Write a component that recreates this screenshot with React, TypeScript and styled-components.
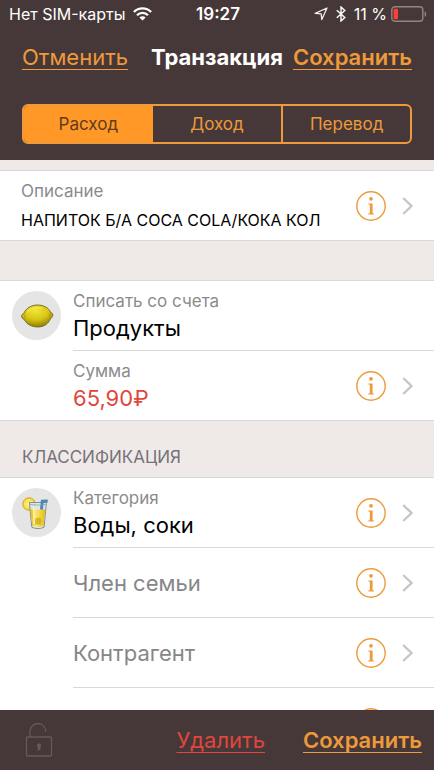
import React, { useState } from "react";
import styled, { createGlobalStyle } from "styled-components";

const color = {
  bar: "#463838",
  accent: "#ff9827",
  link: "#ee9a3b",
  danger: "#e0463d",
  ground: "#efeae8",
  line: "#d9d8d9",
  caption: "#8b8b8c",
  chevron: "#c6c6ca",
};

const GlobalStyle = createGlobalStyle`
  * { box-sizing: border-box; }
  body { margin: 0; background: ${color.ground}; font-family: Inter, "Noto Sans", sans-serif; }
  button { font: inherit; color: inherit; background: none; border: 0; padding: 0; margin: 0; cursor: pointer; }
  svg { display: block; flex: none; }
`;

const Screen = styled.div`
  display: flex;
  flex-direction: column;
  height: 100vh;
  overflow: hidden;
`;

const Header = styled.header`
  flex: none;
  background: ${color.bar};
  color: #fff;
  padding-bottom: 16px;
`;

const StatusBar = styled.div`
  display: grid;
  grid-template-columns: 1fr auto 1fr;
  align-items: center;
  height: 28px;
  padding: 0 7px 0 9px;
  font-size: 16px;
  line-height: 20px;
  white-space: nowrap;
`;

const StatusGroup = styled.div<{ $end?: boolean }>`
  display: flex;
  align-items: center;
  gap: 8px;
  justify-content: ${(p) => (p.$end ? "flex-end" : "flex-start")};
`;

const Clock = styled.time`
  font-size: 17px;
  font-weight: 600;
`;

const BatteryLevel = styled.span`
  display: flex;
  align-items: center;
  gap: 4px;
`;

const NavBar = styled.nav`
  display: grid;
  grid-template-columns: 1fr auto 1fr;
  align-items: center;
  height: 58px;
  padding: 0 22px;
  margin-bottom: 18px;
`;

const Title = styled.h1`
  margin: 0;
  font-size: 22px;
  line-height: 28px;
  font-weight: 700;
`;

const LinkButton = styled.button<{ $strong?: boolean; $danger?: boolean }>`
  && {
    justify-self: ${(p) => (p.$strong ? "end" : "start")};
    color: ${(p) => (p.$danger ? color.danger : color.link)};
    font-size: 22px;
    line-height: 28px;
    font-weight: ${(p) => (p.$strong ? 600 : 400)};
    text-decoration: underline;
    text-decoration-thickness: 1px;
    text-underline-offset: 4px;
    text-decoration-skip-ink: none;
  }
`;

const Segments = styled.div`
  display: grid;
  grid-template-columns: repeat(3, minmax(0, 1fr));
  height: 40px;
  margin: 0 22px;
  border: 2px solid ${color.link};
  border-radius: 6px;
  overflow: hidden;
`;

const Segment = styled.button<{ $active: boolean }>`
  && {
    font-size: 17px;
    line-height: 20px;
    color: ${(p) => (p.$active ? "#5e3c1c" : color.link)};
    background: ${(p) => (p.$active ? color.accent : "transparent")};
  }
  &&:last-child {
    border-left: 2px solid ${color.link};
  }
`;

const Content = styled.main`
  flex: 1;
  min-height: 0;
  overflow: hidden;
  padding-top: 10px;
`;

const Group = styled.section`
  background: #fff;
  border-top: 1px solid ${color.line};
  border-bottom: 1px solid ${color.line};
`;

const Spacer = styled.div`
  height: 39px;
`;

const GroupTitle = styled.h2`
  margin: 0;
  padding: 26px 22px 10px;
  font-size: 17px;
  line-height: 20px;
  font-weight: 400;
  color: #77727a;
`;

const Row = styled.div`
  display: flex;
  align-items: stretch;
`;

const IconSlot = styled.div`
  flex: none;
  width: 73px;
  padding: 10px 0 0 12px;
`;

const Badge = styled.div`
  display: flex;
  align-items: center;
  justify-content: center;
  width: 49px;
  height: 49px;
  border-radius: 50%;
  background: #e5e5e5;
`;

const RowBody = styled.div<{ $inset?: boolean; $last?: boolean }>`
  flex: 1;
  min-width: 0;
  display: flex;
  align-items: center;
  min-height: ${(p) => (p.$last ? 69 : 70)}px;
  padding-left: ${(p) => (p.$inset ? 21 : 0)}px;
  padding-right: 20px;
  border-bottom: ${(p) => (p.$last ? 0 : 1)}px solid ${color.line};
`;

const RowText = styled.button<{ $small?: boolean }>`
  && {
    flex: 1;
    min-width: 0;
    display: flex;
    flex-direction: column;
    padding-top: ${(p) => (p.$small ? 4 : 0)}px;
    text-align: left;
    white-space: nowrap;
  }
`;

const Caption = styled.span`
  font-size: 17px;
  line-height: 24px;
  color: ${color.caption};
`;

const Value = styled.span<{ $tone?: "danger" | "muted"; $small?: boolean }>`
  font-size: ${(p) => (p.$small ? 16 : 22)}px;
  line-height: ${(p) => (p.$small ? 34 : 30)}px;
  color: ${(p) =>
    p.$tone === "danger" ? color.danger : p.$tone === "muted" ? "#868688" : "#000"};
`;

const RoundButton = styled.button`
  && {
    flex: none;
    margin-right: 16px;
  }
`;

const Footer = styled.footer`
  flex: none;
  display: flex;
  align-items: center;
  height: 60px;
  padding: 0 12px 0 25px;
  gap: 38px;
  background: ${color.bar};
`;

const LockButton = styled.button`
  && {
    margin-right: auto;
  }
`;

const WifiIcon = () => (
  <svg width="19" height="14" viewBox="0 0 19 14" fill="none" stroke="#fff" strokeWidth="2.3" aria-hidden>
    <path d="M.9 5A12.2 12.2 0 0 1 18.1 5" />
    <path d="M4 8.2a7.8 7.8 0 0 1 11 0" />
    <path d="M9.5 13.6 6.4 10.5a4.4 4.4 0 0 1 6.2 0Z" fill="#fff" stroke="none" />
  </svg>
);

const LocationIcon = () => (
  <svg width="14" height="14" viewBox="0 0 14 14" fill="none" stroke="#eee" strokeWidth="1.3" strokeLinejoin="round" aria-hidden>
    <path d="M13 1 1.2 6.400l6 .5.6 5.700Z" />
  </svg>
);

const BluetoothIcon = () => (
  <svg width="10" height="16" viewBox="0 0 10 16" fill="none" stroke="#fff" strokeWidth="1.4" aria-hidden>
    <path d="m.8 4.2 8 7.3L5 15V1l3.8 3.5-8 7.3" />
  </svg>
);

const BatteryIcon = () => (
  <svg width="36" height="16" viewBox="0 0 36 16" aria-hidden>
    <rect x=".8" y=".8" width="31" height="14.4" rx="3" fill="none" stroke="#8f8585" strokeWidth="1.4" />
    <path d="M33.6 5.2c2.2.9 2.2 4.7 0 5.6Z" fill="#8f8585" />
    <rect x="2.6" y="2.8" width="4.4" height="10.4" rx="1" fill="#fb3f36" />
  </svg>
);

const InfoIcon = () => (
  <svg width="30" height="30" viewBox="0 0 30 30" aria-hidden>
    <circle cx="15" cy="15" r="14.2" fill="none" stroke={color.link} strokeWidth="1.4" />
    <circle cx="15" cy="7.8" r="1.9" fill={color.link} />
    <path d="M12.400 12.600h4.200v9.600l1.300.3v.9h-5.600v-.9l1.500-.3v-8.400l-1.400-.3Z" fill={color.link} />
  </svg>
);

const ChevronIcon = () => (
  <svg width="12" height="18" viewBox="0 0 12 18" fill="none" stroke={color.chevron} strokeWidth="2.4" aria-hidden>
    <path d="m1.2 1 8.3 8-8.3 8" />
  </svg>
);

const LemonIcon = () => (
  <svg width="34" height="24" viewBox="0 0 34 24" aria-hidden>
    <defs>
      <radialGradient id="lemon" cx=".45" cy=".25" r=".75">
        <stop offset="0" stopColor="#f2e636" />
        <stop offset=".55" stopColor="#d8c514" />
        <stop offset="1" stopColor="#8d7d08" />
      </radialGradient>
    </defs>
    <path
      d="M1.600 12.600c-.3-1.700.8-2.500 2.200-3C5.500 4.500 11 1 17.500 1c6.500 0 11.500 3.200 13.200 7.500 1.400.4 2.200 1.200 2.100 2.800-.1 1.700-1 2.400-2.200 3C28.500 20 23.500 23 17.800 23 12 23 6.500 20.500 4.400 15.600 2.900 15.100 1.800 14.200 1.600 12.600Z"
      fill="url(#lemon)" stroke="#6f641b" strokeWidth=".9"
    />
    <path d="M8 8c2.500-3.500 8-5 13-3.800" fill="none" stroke="#fbf79b" strokeWidth="1.600" strokeLinecap="round" opacity=".4" />
    <path d="M30.200 9.400c-.7 1.500-.7 3 0 4.400M4.600 10.500c.6 1.200.6 2.700.2 4" fill="none" stroke="#a4920f" strokeWidth=".8" />
  </svg>
);

const DrinkIcon = () => (
  <svg width="30" height="34" viewBox="0 0 30 34" aria-hidden>
    <defs>
      <linearGradient id="juice" x1="0" x2="1">
        <stop offset="0" stopColor="#e3b90e" />
        <stop offset=".35" stopColor="#fbe96a" />
        <stop offset="1" stopColor="#e6bb12" />
      </linearGradient>
    </defs>
    <circle cx="7" cy="8" r="6.200" fill="#f8dd42" stroke="#c9a01d" strokeWidth="1" />
    <path d="M7 3.200v9.600M2.200 8h9.600M3.600 4.600l6.800 6.800M10.400 4.600l-6.800 6.800" stroke="#fff6b8" strokeWidth=".8" />
    <path d="M7.400 6.500h17l-2.300 24.700c-3 1.800-9.300 1.800-12.300 0Z" fill="#dbe8ee" fillOpacity=".9" stroke="#78868b" strokeWidth=".9" />
    <path d="M8.300 13.500h15.100l-1.700 16.300c-3 1.300-8.600 1.300-11.500 0Z" fill="url(#juice)" />
    <path d="M12.500 24c1-3 6-3.500 7 0l-.8 4.500h-5.600Z" fill="#c79d0c" opacity=".6" />
    <path d="m11.500 11 .8 17" stroke="#fffbd6" strokeWidth="1.500" opacity=".8" />
    <path d="m19.500 13.500.8-8.300 5.400-.2" fill="none" stroke="#4d87b5" strokeWidth="3" />
    <path d="M8 8.300c4 1 12 1 16 0" fill="none" stroke="#8da0a8" strokeWidth=".8" />
  </svg>
);

const LockIcon = () => (
  <svg width="28" height="36" viewBox="0 0 28 36" fill="none" stroke="#6a5757" strokeWidth="1.300" aria-hidden>
    <rect x="1.500" y="15" width="25" height="19" rx="1" />
    <path d="M5.500 15c-1-2.500-1.200-5-.4-7C6.500 4 9.500 1.500 13 1.500c4.500 0 7.500 3.500 7.800 8.500" />
    <path d="M14 21.200a2.200 2.200 0 0 1 1.200 4l.4 3h-3.200l.4-3a2.200 2.200 0 0 1 1.200-4Z" fill="#6a5757" stroke="none" />
  </svg>
);

type FieldProps = {
  caption?: string;
  value?: string;
  tone?: "danger" | "muted";
  small?: boolean;
  inset?: boolean;
  last?: boolean;
  details?: boolean;
  icon?: React.ReactNode;
};

function Field({ caption, value = "", tone, small, inset, last, details = true, icon }: FieldProps) {
  return (
    <Row>
      {!inset && <IconSlot>{icon && <Badge>{icon}</Badge>}</IconSlot>}
      <RowBody $inset={inset} $last={last}>
        <RowText type="button" $small={small}>
          {caption && <Caption>{caption}</Caption>}
          <Value $tone={tone} $small={small}>{value}</Value>
        </RowText>
        {details && (
          <>
            <RoundButton type="button" aria-label={`Информация: ${caption ?? value}`}>
              <InfoIcon />
            </RoundButton>
            <ChevronIcon />
          </>
        )}
      </RowBody>
    </Row>
  );
}

const kinds = ["Расход", "Доход", "Перевод"];

export default function App() {
  const [kind, setKind] = useState(kinds[0]);
  return (
    <Screen>
      <GlobalStyle />
      <Header>
        <StatusBar>
          <StatusGroup>
            <span>Нет SIM-карты</span>
            <WifiIcon />
          </StatusGroup>
          <Clock>19:27</Clock>
          <StatusGroup $end>
            <LocationIcon />
            <BluetoothIcon />
            <BatteryLevel>
              11 %
              <BatteryIcon />
            </BatteryLevel>
          </StatusGroup>
        </StatusBar>
        <NavBar>
          <LinkButton type="button">Отменить</LinkButton>
          <Title>Транзакция</Title>
          <LinkButton type="button" $strong>Сохранить</LinkButton>
        </NavBar>
        <Segments role="group" aria-label="Тип транзакции">
          {kinds.map((k) => (
            <Segment key={k} type="button" $active={k === kind} aria-pressed={k === kind} onClick={() => setKind(k)}>
              {k}
            </Segment>
          ))}
        </Segments>
      </Header>
      <Content>
        <Group>
          <Field caption="Описание" value="НАПИТОК Б/А COCA COLA/КОКА КОЛ" small inset last />
        </Group>
        <Spacer />
        <Group>
          <Field caption="Списать со счета" value="Продукты" details={false} icon={<LemonIcon />} />
          <Field caption="Сумма" value="65,90₽" tone="danger" last />
        </Group>
        <GroupTitle>КЛАССИФИКАЦИЯ</GroupTitle>
        <Group>
          <Field caption="Категория" value="Воды, соки" icon={<DrinkIcon />} />
          <Field value="Член семьи" tone="muted" />
          <Field value="Контрагент" tone="muted" />
          <Field last />
        </Group>
      </Content>
      <Footer>
        <LockButton type="button" aria-label="Заблокировать">
          <LockIcon />
        </LockButton>
        <LinkButton type="button" $danger>Удалить</LinkButton>
        <LinkButton type="button" $strong>Сохранить</LinkButton>
      </Footer>
    </Screen>
  );
}
